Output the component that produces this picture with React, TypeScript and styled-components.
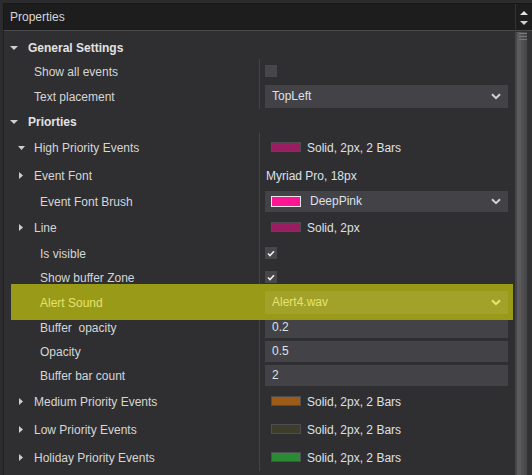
import React from "react";
import styled, { createGlobalStyle, css } from "styled-components";

const Global = createGlobalStyle`
  html, body { margin: 0; padding: 0; background: #2c2c2e; }
  body { font-family: "Liberation Sans", Arial, sans-serif; font-size: 12px; }
`;

const Frame = styled.div`
  width: 532px;
  height: 475px;
  overflow: hidden;
  box-sizing: border-box;
  padding: 3px 0 0 3px;
  background: #2c2c2e;
  display: flex;
  flex-direction: column;
`;

const Header = styled.div`
  display: flex;
  height: 28px;
  box-sizing: border-box;
  background: #1d1d1e;
  border-top: 1px solid #171718;
  border-left: 1px solid #171718;
  border-bottom: 1px solid #4a4a4c;
`;

const Title = styled.div`
  flex: 1;
  display: flex;
  align-items: center;
  padding-left: 6px;
  color: #d6d6d6;
  font-size: 12px;
`;

const ScrollButtons = styled.div`
  width: 17px;
  box-sizing: border-box;
  border-left: 1px solid #333335;
  display: flex;
  flex-direction: column;
  align-items: center;
  justify-content: space-between;
  padding: 7px 0 5px;
`;

const Body = styled.div`
  flex: 1;
  display: flex;
  min-height: 0;
`;

const List = styled.div`
  flex: 1;
  box-sizing: border-box;
  border-left: 1px solid #1f1f21;
  background: #2f2f32;
  padding-top: 4px;
  display: flex;
  flex-direction: column;
`;

const ScrollTrack = styled.div`
  width: 17px;
  background: #313133;
  display: flex;
`;

const Thumb = styled.div`
  width: 12px;
  margin-top: 1px;
  background: linear-gradient(
    to right,
    #464648 0px,
    #464648 2px,
    #5b5b5d 2px,
    #5b5b5d 6px,
    #505052 6px,
    #505052 9px,
    #48484a 9px
  );
  display: flex;
  flex-direction: column;
  align-items: flex-end;
  padding-top: 1px;
  gap: 1px;
`;

const GripLine = styled.div`
  width: 8px;
  height: 1px;
  background: #777779;
  margin-bottom: 1px;
`;

const Row = styled.div<{ $h: number; $hl?: boolean }>`
  display: grid;
  grid-template-columns: 256px 1fr;
  height: ${(p) => p.$h}px;
  flex-shrink: 0;
  position: relative;
  ${(p) =>
    p.$hl &&
    css`
      z-index: 5;
      & > * {
        position: relative;
        z-index: 2;
      }
    `}
`;

const Highlight = styled.span`
  position: absolute !important;
  z-index: 1 !important;
  top: -5px;
  bottom: -5px;
  left: 7px;
  right: 2px;
  background: #9a9a19;
`;

const Label = styled.div<{ $pad: number; $cat?: boolean; $hl?: boolean }>`
  display: flex;
  align-items: center;
  box-sizing: border-box;
  padding-left: ${(p) => p.$pad}px;
  padding-top: 1px;
  border-right: 1px solid ${(p) => (p.$cat || p.$hl ? "transparent" : "#444447")};
  color: ${(p) => (p.$hl ? "#e4e46c" : p.$cat ? "#e2e2e2" : "#d6d6d6")};
  font-weight: ${(p) => (p.$cat ? "bold" : "normal")};
  white-space: pre;
`;

const ArrowBox = styled.span<{ $gap: number }>`
  display: inline-flex;
  margin-right: ${(p) => p.$gap}px;
`;

const Value = styled.div`
  display: flex;
  align-items: center;
  padding: 0 7px 0 5px;
  min-width: 0;
`;

const ValueText = styled.span<{ $hl?: boolean; $lead?: number }>`
  color: ${(p) => (p.$hl ? "#e4e46c" : "#dde1e8")};
  white-space: pre;
  margin-left: ${(p) => p.$lead ?? 0}px;
  padding-top: 1px;
`;

const Box = styled.div<{ $h: number; $hl?: boolean }>`
  flex: 1;
  height: ${(p) => p.$h}px;
  display: flex;
  align-items: center;
  padding: 0 7px 0 6px;
  background: ${(p) => (p.$hl ? "#a2a22a" : "#424247")};
  box-sizing: border-box;
`;

const BoxText = styled.span<{ $hl?: boolean }>`
  flex: 1;
  color: ${(p) => (p.$hl ? "#e4e46c" : "#dde1e8")};
  padding-left: 1px;
`;

const Swatch = styled.span<{ $c: string; $light?: boolean }>`
  width: 30px;
  height: 10px;
  box-sizing: border-box;
  background: ${(p) => p.$c};
  border: 1px solid ${(p) => (p.$light ? "#e8e8e8" : "#4e4e52")};
  margin-right: 6px;
  flex-shrink: 0;
`;

const SwatchInBox = styled(Swatch)`
  margin-right: 8px;
  height: 11px;
`;

const SwatchLead = styled.span`
  width: 6px;
  flex-shrink: 0;
`;

const Check = styled.span`
  width: 12px;
  height: 12px;
  background: #47474b;
  display: inline-flex;
  align-items: center;
  justify-content: center;
`;

const Tri = ({ dir, size }: { dir: "down" | "right" | "up"; size: number }) => {
  if (dir === "right")
    return (
      <svg width={4} height={7} viewBox="0 0 4 7">
        <path d="M0 0 L4 3.5 L0 7 Z" fill="#cfcfcf" />
      </svg>
    );
  if (dir === "up")
    return (
      <svg width={size} height={4} viewBox={`0 0 ${size} 4`}>
        <path d={`M0 4 L${size / 2} 0 L${size} 4 Z`} fill="#e2e2e2" />
      </svg>
    );
  return (
    <svg width={size} height={4} viewBox={`0 0 ${size} 4`}>
      <path d={`M0 0 L${size} 0 L${size / 2} 4 Z`} fill="#cfcfcf" />
    </svg>
  );
};

const Chevron = ({ hl }: { hl?: boolean }) => (
  <svg width={10} height={7} viewBox="0 0 10 7">
    <polyline
      points="1,1.2 5,5.2 9,1.2"
      fill="none"
      stroke={hl ? "#e8e870" : "#d2d2d6"}
      strokeWidth={2}
    />
  </svg>
);

const Tick = () => (
  <svg width={8} height={7} viewBox="0 0 8 7">
    <polyline points="1,3.5 3,5.5 7,1.2" fill="none" stroke="#f0f0f0" strokeWidth={1.6} />
  </svg>
);

type Arrow = { dir: "down" | "right"; size: number; pad: number; gap: number };

type RowDef = {
  label: string;
  h: number;
  cat?: boolean;
  pad: number;
  arrow?: Arrow;
  hl?: boolean;
  value?: React.ReactNode;
};

const Dropdown = ({ text, swatch, hl, h = 23 }: { text: string; swatch?: string; hl?: boolean; h?: number }) => (
  <Box $h={h} $hl={hl}>
    {swatch && <SwatchInBox $c={swatch} $light />}
    <BoxText $hl={hl}>{text}</BoxText>
    <Chevron hl={hl} />
  </Box>
);

const TextBox = ({ text }: { text: string }) => (
  <Box $h={21}>
    <BoxText>{text}</BoxText>
  </Box>
);

const StrokeValue = ({ color, text }: { color: string; text: string }) => (
  <>
    <SwatchLead />
    <Swatch $c={color} />
    <ValueText>{text}</ValueText>
  </>
);

const catArrow: Arrow = { dir: "down", size: 8, pad: 6, gap: 10 };
const subDown: Arrow = { dir: "down", size: 7, pad: 14, gap: 9 };
const subRight: Arrow = { dir: "right", size: 4, pad: 15, gap: 11 };

const checked = (
  <Check>
    <Tick />
  </Check>
);

const rows: RowDef[] = [
  { label: "General Settings", h: 24, cat: true, pad: 0, arrow: catArrow },
  { label: "Show all events", h: 24, pad: 30, value: <Check /> },
  { label: "Text placement", h: 26, pad: 30, value: <Dropdown text="TopLeft" /> },
  { label: "Priorties", h: 24, cat: true, pad: 0, arrow: catArrow },
  {
    label: "High Priority Events",
    h: 28,
    pad: 0,
    arrow: subDown,
    value: <StrokeValue color="#9b1d61" text="Solid, 2px, 2 Bars" />,
  },
  {
    label: "Event Font",
    h: 28,
    pad: 0,
    arrow: subRight,
    value: <ValueText $lead={1}>Myriad Pro, 18px</ValueText>,
  },
  {
    label: "Event Font Brush",
    h: 24,
    pad: 36,
    value: <Dropdown text="DeepPink" swatch="#ff1493" h={21} />,
  },
  { label: "Line", h: 28, pad: 0, arrow: subRight, value: <StrokeValue color="#9b1d61" text="Solid, 2px" /> },
  { label: "Is visible", h: 24, pad: 36, value: checked },
  { label: "Show buffer Zone", h: 24, pad: 36, value: checked },
  { label: "Alert Sound", h: 26, pad: 36, hl: true, value: <Dropdown text="Alert4.wav" hl /> },
  { label: "Buffer  opacity", h: 24, pad: 36, value: <TextBox text="0.2" /> },
  { label: "Opacity", h: 24, pad: 36, value: <TextBox text="0.5" /> },
  { label: "Buffer bar count", h: 24, pad: 36, value: <TextBox text="2" /> },
  {
    label: "Medium Priority Events",
    h: 28,
    pad: 0,
    arrow: subRight,
    value: <StrokeValue color="#9d5b18" text="Solid, 2px, 2 Bars" />,
  },
  {
    label: "Low Priority Events",
    h: 28,
    pad: 0,
    arrow: subRight,
    value: <StrokeValue color="#3e3d2b" text="Solid, 2px, 2 Bars" />,
  },
  {
    label: "Holiday Priority Events",
    h: 28,
    pad: 0,
    arrow: subRight,
    value: <StrokeValue color="#2b8a34" text="Solid, 2px, 2 Bars" />,
  },
];

export default function App() {
  return (
    <>
      <Global />
      <Frame>
        <Header>
          <Title>Properties</Title>
          <ScrollButtons>
            <Tri dir="up" size={8} />
            <Tri dir="down" size={8} />
          </ScrollButtons>
        </Header>
        <Body>
          <List>
            {rows.map((r, i) => (
              <Row key={i} $h={r.h} $hl={r.hl}>
                {r.hl && <Highlight />}
                <Label $pad={r.arrow ? r.arrow.pad : r.pad} $cat={r.cat} $hl={r.hl}>
                  {r.arrow && (
                    <ArrowBox $gap={r.arrow.gap}>
                      <Tri dir={r.arrow.dir} size={r.arrow.size} />
                    </ArrowBox>
                  )}
                  {r.label}
                </Label>
                {!r.cat && <Value>{r.value}</Value>}
              </Row>
            ))}
          </List>
          <ScrollTrack>
            <Thumb>
              <GripLine />
              <GripLine />
              <GripLine />
            </Thumb>
          </ScrollTrack>
        </Body>
      </Frame>
    </>
  );
}
